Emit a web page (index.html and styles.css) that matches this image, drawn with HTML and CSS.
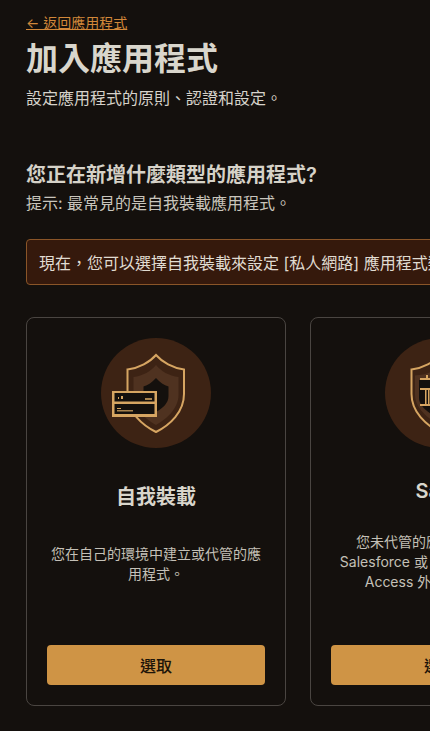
FILE: index.html
```html
<!DOCTYPE html>
<html lang="zh-Hant">
<head>
  <meta charset="UTF-8">
  <meta name="viewport" content="width=device-width, initial-scale=1.0">
  <title>加入應用程式</title>
  <link rel="stylesheet" href="styles.css">
</head>
<body>
  <main class="page">
    <a class="back-link" href="#">← 返回應用程式</a>
    <h1>加入應用程式</h1>
    <p class="subtitle">設定應用程式的原則、認證和設定。</p>

    <h2>您正在新增什麼類型的應用程式?</h2>
    <p class="hint">提示: 最常見的是自我裝載應用程式。</p>

    <div class="notice">現在，您可以選擇自我裝載來設定 [私人網路] 應用程式類型的原則和設定。</div>

    <div class="card-row">
      <section class="card">
        <svg class="card-icon" viewBox="0 0 110 110" width="110" height="110">
          <circle cx="55" cy="55" r="55" fill="#3d2314"/>
          <path d="M55 17C49 24 38 30 26.5 31.5V56C26.5 74 41 87 55 94C69 87 83 74 83 56V31.5C72 30 61 24 55 17Z" fill="#3d2314" stroke="#d6a562" stroke-width="2"/>
          <path d="M55 27C50 33 42 38 32.5 39V57C32.5 70 44 81 55 87C66 81 77.5 70 77.5 57V39C68 38 60 33 55 27Z" fill="#4f3220"/>
          <path d="M55 40C51 44 47 47.5 42.5 48.5V58C42.5 65 48 70 55 74C62 70 67.5 65 67.5 58V48.5C63 47.5 59 44 55 40Z" fill="#14100d"/>
          <rect x="11" y="53" width="45" height="26" fill="#d6a562"/>
          <rect x="13.5" y="55" width="40" height="8.5" fill="#14100d"/>
          <rect x="13.5" y="66" width="40" height="10" fill="#14100d"/>
          <rect x="17" y="59" width="1" height="2" fill="#d6a562"/>
          <rect x="20" y="58" width="2" height="3" fill="#d6a562"/>
          <rect x="44" y="60" width="7" height="2" fill="#a8834e"/>
          <rect x="16" y="70" width="4" height="1" fill="#d6a562"/>
          <rect x="16" y="72" width="16" height="1.5" fill="#a8834e"/>
        </svg>
        <h3>自我裝載</h3>
        <p class="card-text">您在自己的環境中建立或代管的應用程式。</p>
        <button class="select-btn" type="button">選取</button>
      </section>

      <section class="card card-saas">
        <svg class="card-icon" viewBox="0 0 110 110" width="110" height="110">
          <circle cx="55" cy="55" r="55" fill="#3d2314"/>
          <path d="M55 17C49 24 38 30 26.5 31.5V56C26.5 74 41 87 55 94C69 87 83 74 83 56V31.5C72 30 61 24 55 17Z" fill="#3d2314" stroke="#d6a562" stroke-width="2"/>
          <path d="M55 27C50 33 42 37 30 37.5V57C30 70 43 81 55 87C67 81 80 70 80 57V37.5C68 37 60 33 55 27Z" fill="#4f3220"/>
          <path d="M34 42H76V60C76 68 66 76 55 81C44 76 34 68 34 60Z" fill="#14100d"/>
          <rect x="41" y="37" width="2" height="3" fill="#d6a562"/>
          <rect x="35" y="40" width="40" height="2" fill="#d6a562"/>
          <rect x="35" y="50" width="40" height="2" fill="#d6a562"/>
          <rect x="40" y="52" width="1.5" height="14" fill="#d6a562"/>
          <rect x="43" y="52" width="1.5" height="14" fill="#d6a562"/>
          <rect x="35" y="66" width="40" height="2" fill="#d6a562"/>
        </svg>
        <h3>SaaS</h3>
        <p class="card-text">您未代管的應用程式，例如 Salesforce 或 Tableau，可透過 Access 外部連線服務。</p>
        <button class="select-btn" type="button">選取</button>
      </section>
    </div>
  </main>
</body>
</html>
```

FILE: styles.css
```css
* {
  box-sizing: border-box;
}

html, body {
  margin: 0;
  height: 100%;
  overflow: hidden;
}

body {
  background: #14100d;
  color: #e6e2da;
  font-family: Inter, "Noto Sans CJK TC", sans-serif;
}

.page {
  padding: 12px 0 0 26px;
  width: 430px;
  overflow: hidden;
}

.back-link {
  display: inline-block;
  color: #d2883a;
  font-size: 14px;
  line-height: 20px;
  text-decoration: underline;
}

h1 {
  margin: 6px 0 0;
  font-size: 32px;
  line-height: 40px;
  font-weight: 600;
  color: #d9d6cc;
}

.subtitle {
  margin: 7px 0 0;
  font-size: 16px;
  line-height: 24px;
  color: #d6d2ca;
}

h2 {
  margin: 51px 0 0;
  font-size: 20px;
  line-height: 28px;
  font-weight: 600;
  color: #d6d2c8;
}

.hint {
  margin: 2px 0 0;
  font-size: 16px;
  line-height: 24px;
  color: #c9c5bc;
}

.notice {
  margin-top: 24px;
  width: 560px;
  height: 46px;
  padding: 0 12px;
  display: flex;
  align-items: center;
  white-space: nowrap;
  overflow: hidden;
  background: #35190c;
  border: 1px solid #8a5528;
  border-radius: 4px;
  font-size: 16px;
  color: #e0dcd2;
}

.card-row {
  display: flex;
  gap: 24px;
  margin-top: 32px;
}

.card {
  flex: 0 0 260px;
  height: 389px;
  padding: 20px;
  display: flex;
  flex-direction: column;
  align-items: center;
  border: 1px solid #4a4541;
  border-radius: 8px;
}

.card-icon {
  flex: none;
  display: block;
}

h3 {
  margin: 33px 0 0;
  font-size: 20px;
  line-height: 32px;
  font-weight: 600;
  color: #d9d6cc;
}

.card-text {
  margin: 31px 0 0;
  font-size: 14px;
  line-height: 20px;
  text-align: center;
  color: #c4c0b7;
}

.card-saas h3 {
  margin-top: 27px;
}

.card-saas .card-text {
  margin-top: 25px;
}

.select-btn {
  margin-top: auto;
  width: 100%;
  height: 40px;
  border: 0;
  border-radius: 4px;
  background: #cf9445;
  color: #1d1409;
  font: 500 16px Inter, "Noto Sans CJK TC", sans-serif;
}
```
